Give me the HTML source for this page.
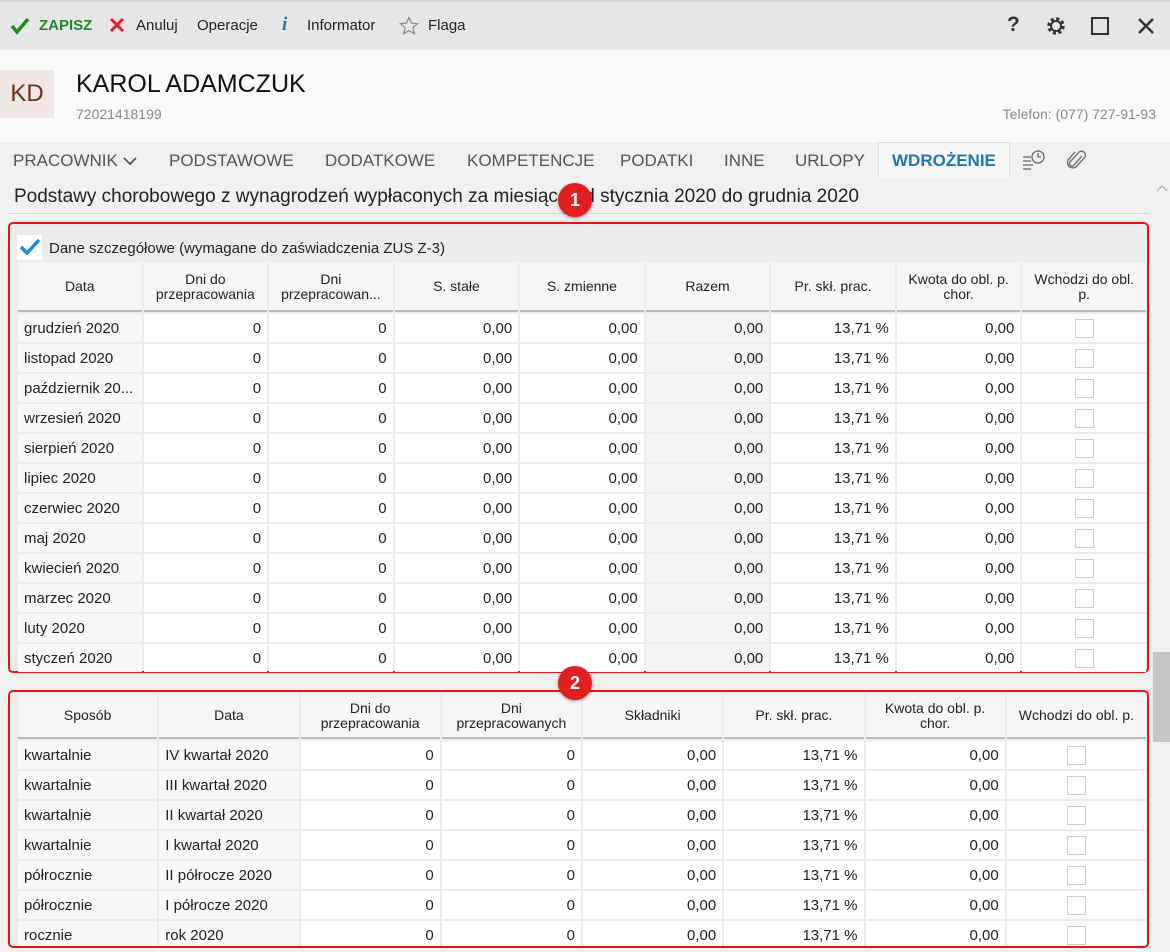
<!DOCTYPE html>
<html><head><meta charset="utf-8"><style>
*{box-sizing:border-box;margin:0;padding:0}
body{width:1170px;height:952px;overflow:hidden;background:#f0f0f0;font-family:"Liberation Sans",sans-serif;color:#222;position:relative;font-size:15px}
.abs{position:absolute}
.tb{top:0;left:0;width:1170px;height:50px;background:#e6e6e6;border-top:2px solid #d4d4d4}
.tb span{position:absolute;top:15px;font-size:15px}
.hdr{top:50px;left:0;width:1170px;height:92px;background:#fafafa}
.tabs{top:142px;left:0;width:1170px;height:36px;background:#f0f0f0}
.tabs span{position:absolute;top:9px;font-size:17px;color:#555}
.box{border:2px solid #e8141c;border-radius:5px;background:#ececec}
table{border-collapse:separate;border-spacing:2px;position:absolute;table-layout:fixed}
td,th{background:#fff;height:28px;padding:0 6px;font-size:15px;white-space:nowrap;overflow:hidden;text-overflow:ellipsis}
th{background:#f6f6f6;font-weight:normal;text-align:center;font-size:14px;line-height:15px;white-space:normal;border-bottom:2px solid #bbb}
td{text-align:right}
td.l{text-align:left;background:#f8f8f8}
td.g{background:#f3f3f3}
.cb{display:inline-block;width:19px;height:19px;border:1px solid #ccc;background:#fff;vertical-align:middle}
td.c{text-align:center}
.badge{width:34px;height:34px;border-radius:50%;background:#e02020;color:#fff;font-weight:bold;font-size:18px;text-align:center;line-height:34px;box-shadow:0 1px 3px rgba(0,0,0,.4)}
</style></head><body>
<div class="abs tb">
<svg class="abs" style="left:10px;top:15px" width="20" height="18"><path d="M2 9l5 6L18 2" stroke="#1e8a2a" stroke-width="3.5" fill="none"/></svg>
<span style="left:39px;color:#1e8a2a;font-weight:bold">ZAPISZ</span>
<svg class="abs" style="left:109px;top:15px" width="16" height="16"><path d="M2 2l12 12M14 2L2 14" stroke="#e02030" stroke-width="3"/></svg>
<span style="left:136px">Anuluj</span>
<span style="left:197px">Operacje</span>
<span style="left:282px;color:#1a7ac0;font-style:italic;font-weight:bold;font-family:'Liberation Serif',serif;font-size:19px;top:12px">i</span>
<span style="left:307px">Informator</span>
<svg class="abs" style="left:399px;top:14px" width="20" height="20"><path d="M10 1.5l2.5 5.6 6 .6-4.6 4 1.4 6L10 14.6 4.7 17.7l1.4-6-4.6-4 6-.6z" stroke="#888" stroke-width="1.2" fill="none"/></svg>
<span style="left:428px">Flaga</span>
<span style="left:1007px;font-size:21px;top:11px;color:#333;font-weight:bold">?</span>
<svg class="abs" style="left:1044px;top:12px" width="24" height="24" viewBox="0 0 24 24"><circle cx="12" cy="12" r="7" stroke="#333" stroke-width="3.5" fill="none" stroke-dasharray="3 2.5"/><circle cx="12" cy="12" r="5" stroke="#333" stroke-width="2" fill="none"/></svg>
<div class="abs" style="left:1091px;top:15px;width:18px;height:18px;border:2.5px solid #333"></div>
<svg class="abs" style="left:1137px;top:15px" width="18" height="18"><path d="M2 2l14 14M16 2L2 16" stroke="#333" stroke-width="2.5"/></svg>
</div>
<div class="abs hdr">
<div class="abs" style="left:0;top:20px;width:54px;height:48px;background:#f0e6e4;color:#6b3018;font-size:24px;line-height:48px;text-align:center">KD</div>
<div class="abs" style="left:76px;top:20px;font-size:25px;color:#111">KAROL ADAMCZUK</div>
<div class="abs" style="left:76px;top:56px;font-size:14px;color:#888">72021418199</div>
<div class="abs" style="right:14px;top:56px;font-size:14px;color:#888">Telefon: (077) 727-91-93</div>
</div>
<div class="abs tabs">
<span style="left:13px">PRACOWNIK <svg width="14" height="10"><path d="M1 2l6 6 6-6" stroke="#555" stroke-width="1.8" fill="none"/></svg></span>
<span style="left:169px">PODSTAWOWE</span>
<span style="left:325px">DODATKOWE</span>
<span style="left:467px">KOMPETENCJE</span>
<span style="left:620px">PODATKI</span>
<span style="left:724px">INNE</span>
<span style="left:795px">URLOPY</span>
<div class="abs" style="left:878px;top:0;width:132px;height:36px;background:#f7f7f7;border:1px solid #ddd;border-bottom:none"></div>
<span style="left:892px;color:#1a78b8;font-weight:bold">WDROŻENIE</span>
<svg class="abs" style="left:1022px;top:6px" width="24" height="24"><path d="M1 9h8M1 13h8M1 17h10M1 21h8" stroke="#666" stroke-width="1.2"/><circle cx="16" cy="9" r="6" stroke="#666" stroke-width="1.3" fill="none"/><path d="M16 5v4h3" stroke="#666" stroke-width="1.3" fill="none"/></svg>
<svg class="abs" style="left:1066px;top:6px" width="22" height="24"><path d="M16 8l-8 9a2.5 2.5 0 0 1-4-3l9-10a4 4 0 0 1 6 5l-9 10a5.5 5.5 0 0 1-8-7l7-8" stroke="#777" stroke-width="1.5" fill="none"/></svg>
</div>
<div class="abs" style="left:14px;top:186px;font-size:19px;color:#222">Podstawy chorobowego z wynagrodzeń wypłaconych za miesiące od stycznia 2020 do grudnia 2020</div>
<div class="abs" style="left:8px;top:213px;width:1142px;height:1px;background:#d6d6d6"></div>
<svg class="abs" style="left:1155px;top:183px" width="14" height="10"><path d="M2 8l5-5 5 5" stroke="#bbb" stroke-width="1.5" fill="none"/></svg>
<div class="abs" style="left:1153px;top:652px;width:17px;height:90px;background:#c6c6c6"></div>

<div class="abs box" style="left:8px;top:222px;width:1141px;height:451px"></div>
<div class="abs" style="left:17px;top:235px;width:25px;height:25px;background:#fff"></div>
<svg class="abs" style="left:19px;top:238px" width="22" height="18"><path d="M2 9l6 6L20 2" stroke="#1a8ad4" stroke-width="3.5" fill="none"/></svg>
<div class="abs" style="left:49px;top:240px;font-size:15px">Dane szczegółowe (wymagane do zaświadczenia ZUS Z-3)</div>
<table style="left:16px;top:261px;width:1132px">
<tr><th style="height:49px">Data</th><th>Dni do przepracowania</th><th>Dni przepracowan...</th><th>S. stałe</th><th>S. zmienne</th><th>Razem</th><th>Pr. skł. prac.</th><th>Kwota do obl. p. chor.</th><th>Wchodzi do obl. p.</th></tr>
<tr><td class="l">grudzień 2020</td><td>0</td><td>0</td><td>0,00</td><td>0,00</td><td class="g">0,00</td><td>13,71 %</td><td>0,00</td><td class="c"><span class="cb"></span></td></tr>
<tr><td class="l">listopad 2020</td><td>0</td><td>0</td><td>0,00</td><td>0,00</td><td class="g">0,00</td><td>13,71 %</td><td>0,00</td><td class="c"><span class="cb"></span></td></tr>
<tr><td class="l">październik 20...</td><td>0</td><td>0</td><td>0,00</td><td>0,00</td><td class="g">0,00</td><td>13,71 %</td><td>0,00</td><td class="c"><span class="cb"></span></td></tr>
<tr><td class="l">wrzesień 2020</td><td>0</td><td>0</td><td>0,00</td><td>0,00</td><td class="g">0,00</td><td>13,71 %</td><td>0,00</td><td class="c"><span class="cb"></span></td></tr>
<tr><td class="l">sierpień 2020</td><td>0</td><td>0</td><td>0,00</td><td>0,00</td><td class="g">0,00</td><td>13,71 %</td><td>0,00</td><td class="c"><span class="cb"></span></td></tr>
<tr><td class="l">lipiec 2020</td><td>0</td><td>0</td><td>0,00</td><td>0,00</td><td class="g">0,00</td><td>13,71 %</td><td>0,00</td><td class="c"><span class="cb"></span></td></tr>
<tr><td class="l">czerwiec 2020</td><td>0</td><td>0</td><td>0,00</td><td>0,00</td><td class="g">0,00</td><td>13,71 %</td><td>0,00</td><td class="c"><span class="cb"></span></td></tr>
<tr><td class="l">maj 2020</td><td>0</td><td>0</td><td>0,00</td><td>0,00</td><td class="g">0,00</td><td>13,71 %</td><td>0,00</td><td class="c"><span class="cb"></span></td></tr>
<tr><td class="l">kwiecień 2020</td><td>0</td><td>0</td><td>0,00</td><td>0,00</td><td class="g">0,00</td><td>13,71 %</td><td>0,00</td><td class="c"><span class="cb"></span></td></tr>
<tr><td class="l">marzec 2020</td><td>0</td><td>0</td><td>0,00</td><td>0,00</td><td class="g">0,00</td><td>13,71 %</td><td>0,00</td><td class="c"><span class="cb"></span></td></tr>
<tr><td class="l">luty 2020</td><td>0</td><td>0</td><td>0,00</td><td>0,00</td><td class="g">0,00</td><td>13,71 %</td><td>0,00</td><td class="c"><span class="cb"></span></td></tr>
<tr><td class="l">styczeń 2020</td><td>0</td><td>0</td><td>0,00</td><td>0,00</td><td class="g">0,00</td><td>13,71 %</td><td>0,00</td><td class="c"><span class="cb"></span></td></tr>
</table>

<div class="abs box" style="left:8px;top:690px;width:1141px;height:258px;overflow:hidden">
<table style="left:6px;top:0px;width:1132px">
<tr><th style="height:45px">Sposób</th><th>Data</th><th>Dni do przepracowania</th><th>Dni przepracowanych</th><th>Składniki</th><th>Pr. skł. prac.</th><th>Kwota do obl. p. chor.</th><th>Wchodzi do obl. p.</th></tr>
<tr><td class="l">kwartalnie</td><td class="l">IV kwartał 2020</td><td>0</td><td>0</td><td>0,00</td><td>13,71 %</td><td>0,00</td><td class="c"><span class="cb"></span></td></tr>
<tr><td class="l">kwartalnie</td><td class="l">III kwartał 2020</td><td>0</td><td>0</td><td>0,00</td><td>13,71 %</td><td>0,00</td><td class="c"><span class="cb"></span></td></tr>
<tr><td class="l">kwartalnie</td><td class="l">II kwartał 2020</td><td>0</td><td>0</td><td>0,00</td><td>13,71 %</td><td>0,00</td><td class="c"><span class="cb"></span></td></tr>
<tr><td class="l">kwartalnie</td><td class="l">I kwartał 2020</td><td>0</td><td>0</td><td>0,00</td><td>13,71 %</td><td>0,00</td><td class="c"><span class="cb"></span></td></tr>
<tr><td class="l">półrocznie</td><td class="l">II półrocze 2020</td><td>0</td><td>0</td><td>0,00</td><td>13,71 %</td><td>0,00</td><td class="c"><span class="cb"></span></td></tr>
<tr><td class="l">półrocznie</td><td class="l">I półrocze 2020</td><td>0</td><td>0</td><td>0,00</td><td>13,71 %</td><td>0,00</td><td class="c"><span class="cb"></span></td></tr>
<tr><td class="l">rocznie</td><td class="l">rok 2020</td><td>0</td><td>0</td><td>0,00</td><td>13,71 %</td><td>0,00</td><td class="c"><span class="cb"></span></td></tr>
</table>
</div>
<div class="abs badge" style="left:558px;top:183px">1</div>
<div class="abs badge" style="left:558px;top:666px">2</div>
</body></html>
